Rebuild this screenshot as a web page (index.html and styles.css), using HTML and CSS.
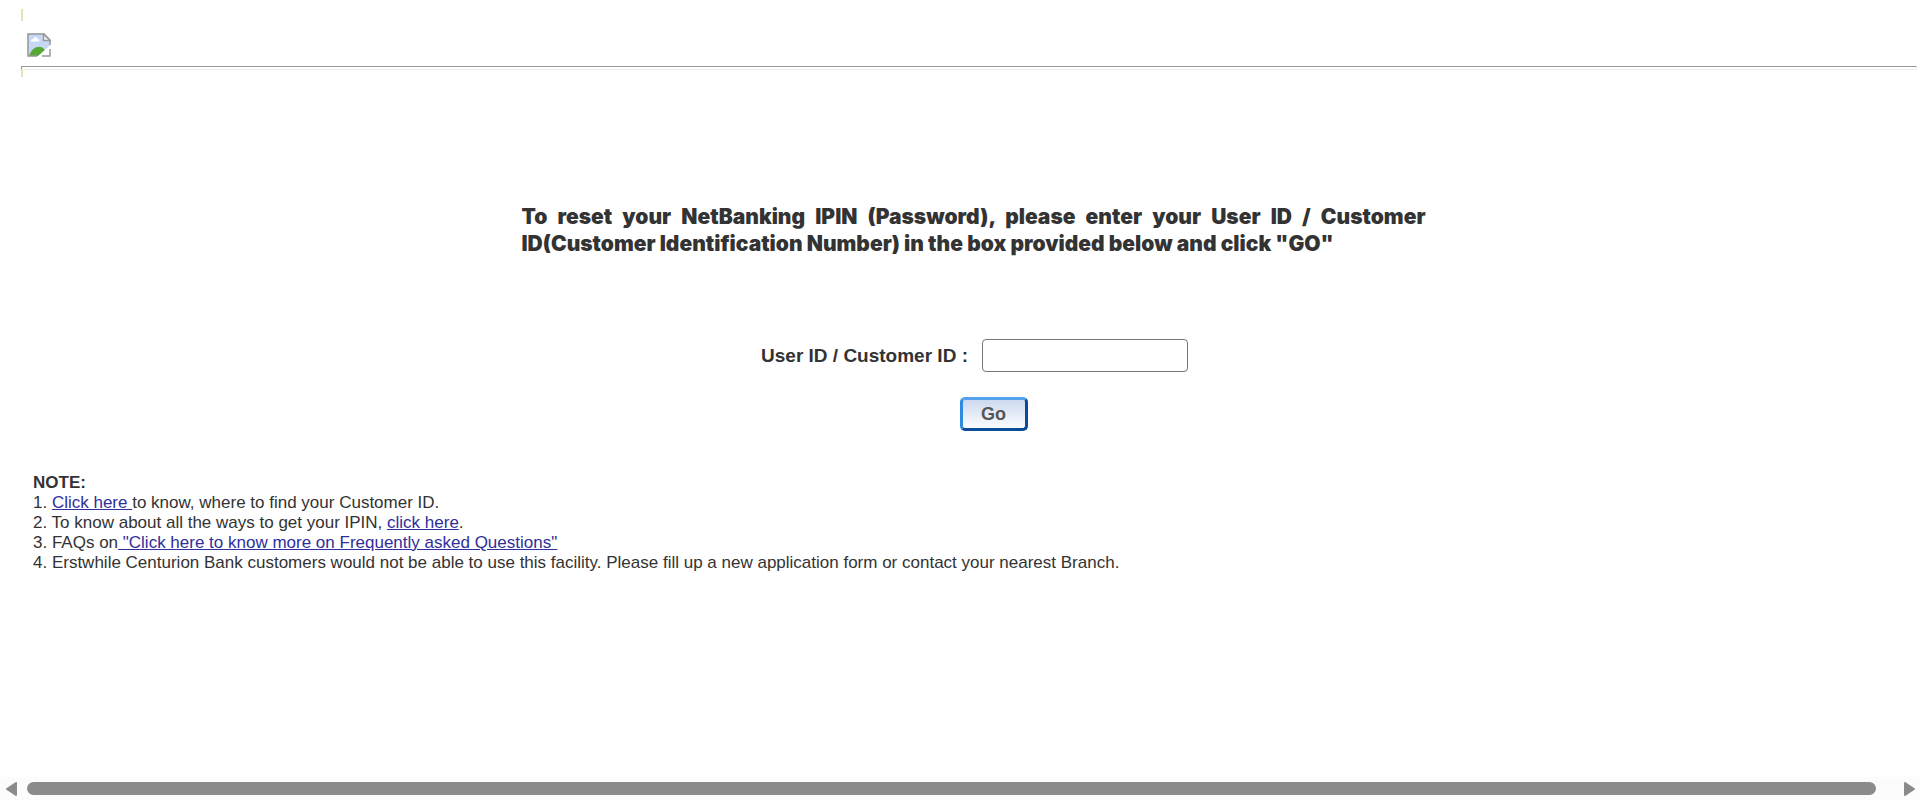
FILE: index.html
```html
<!DOCTYPE html>
<html lang="en">
<head>
<meta charset="utf-8">
<title>Reset NetBanking IPIN</title>
<link rel="stylesheet" href="styles.css">
</head>
<body>
<header class="header">
  <div class="tick"></div>
  <svg class="logo" viewBox="0 0 24 24" role="img" aria-label="Logo">
    <path d="M0.500 0.500H16.500L23.500 7.500V12L10 23.500H0.500Z" fill="#c6d8f5"/>
    <path d="M2 23C5 13 14 11 18 17L11 23Z" fill="#57a936"/>
    <path d="M4 8.500C4 6 6 6 6.500 6C7 3 10.500 4 10.500 6C13 6 12.500 8.500 11.500 8.500Z" fill="#fff"/>
    <path d="M10 24L24 12V16L15 24Z" fill="#fff"/>
    <path d="M23 12V7L17 1H1V23H10M15 23H23V16" fill="none" stroke="#999" stroke-width="1.500"/>
    <path d="M16.500 1V7.500H23Z" fill="#f4f4f4" stroke="#999" stroke-width="1.500"/>
  </svg>
  <hr class="rule">
  <div class="tick tick-short"></div>
</header>
<main class="main">
  <p class="intro">To reset your NetBanking IPIN (Password), please enter your User ID / Customer ID(Customer Identification Number) in the box provided below and click "GO"</p>
  <form class="form">
    <div class="field">
      <label for="user-id">User ID / Customer ID :</label>
      <input class="box" id="user-id" type="text">
    </div>
    <button class="go" type="button">Go</button>
  </form>
  <section class="notes">
    <strong>NOTE:</strong>
    <div>1. <a href="#">Click here </a>to know, where to find your Customer ID.</div>
    <div>2. To know about all the ways to get your IPIN, <a href="#">click here</a>.</div>
    <div>3. FAQs on<a href="#"> "Click here to know more on Frequently asked Questions"</a></div>
    <div>4. Erstwhile Centurion Bank customers would not be able to use this facility. Please fill up a new application form or contact your nearest Branch.</div>
  </section>
</main>
<div class="scroll">
  <svg class="arrow" viewBox="0 0 12 14" aria-hidden="true"><path d="M10 1V13L1 7Z"/></svg>
  <div class="thumb"></div>
  <svg class="arrow" viewBox="0 0 12 14" aria-hidden="true"><path d="M2 1V13L11 7Z"/></svg>
</div>
</body>
</html>
```
FILE: styles.css
```css
* { box-sizing: border-box; }
body {
  margin: 0;
  min-height: 100vh;
  display: flex;
  flex-direction: column;
  background: #fff;
  color: #333;
  font: 17px/20px "Liberation Sans", Arial, sans-serif;
}
.header { padding: 9px 3px 0 21px; }
.tick { width: 2px; height: 12px; background: #dfe8b0; }
.tick-short { height: 7px; }
.logo { display: block; width: 24px; height: 24px; margin: 12px 0 9px 6px; }
.rule {
  height: 4px;
  margin: 0;
  border: 1px solid;
  border-color: #999 #eee #eee #999;
}
.main { flex: 1; padding: 126px 6px 0 33px; }
.intro {
  width: 904px;
  max-width: 100%;
  margin: 0 auto;
  font: 900 21px/27px Inter, "Liberation Sans", sans-serif;
  text-align: justify;
}
.form {
  display: flex;
  flex-direction: column;
  align-items: center;
  gap: 25px;
  padding-top: 82px;
}
.field {
  display: flex;
  align-items: center;
  gap: 14px;
  padding-left: 2px;
  font-size: 19px;
  font-weight: bold;
}
.box {
  width: 206px;
  height: 33px;
  border: 1px solid #767676;
  border-radius: 4px;
  background: #fff;
  font: inherit;
}
.go {
  width: 68px;
  height: 34px;
  margin-left: 40px;
  padding: 0;
  border: 3px solid;
  border-color: #55a3ec #0b4c98 #0b4c98 #2f8be0;
  border-radius: 5px;
  background: linear-gradient(#ccd9ef, #fbfcff) padding-box;
  color: #555;
  font: bold 18px/24px "Liberation Sans", Arial, sans-serif;
}
.notes { padding-top: 42px; }
.notes strong { display: block; }
.notes a { color: #2f2f9c; }
.scroll {
  display: flex;
  align-items: center;
  gap: 9px;
  height: 23px;
  padding: 0 5px 0 6px;
  background: #fcfcfc;
}
.arrow {
  width: 12px;
  height: 14px;
  fill: #8b8b8b;
  stroke: #8b8b8b;
  stroke-width: 2;
  stroke-linejoin: round;
}
.thumb { flex: 1; height: 13px; margin-right: 18px; border-radius: 7px; background: #8b8b8b; }
```
